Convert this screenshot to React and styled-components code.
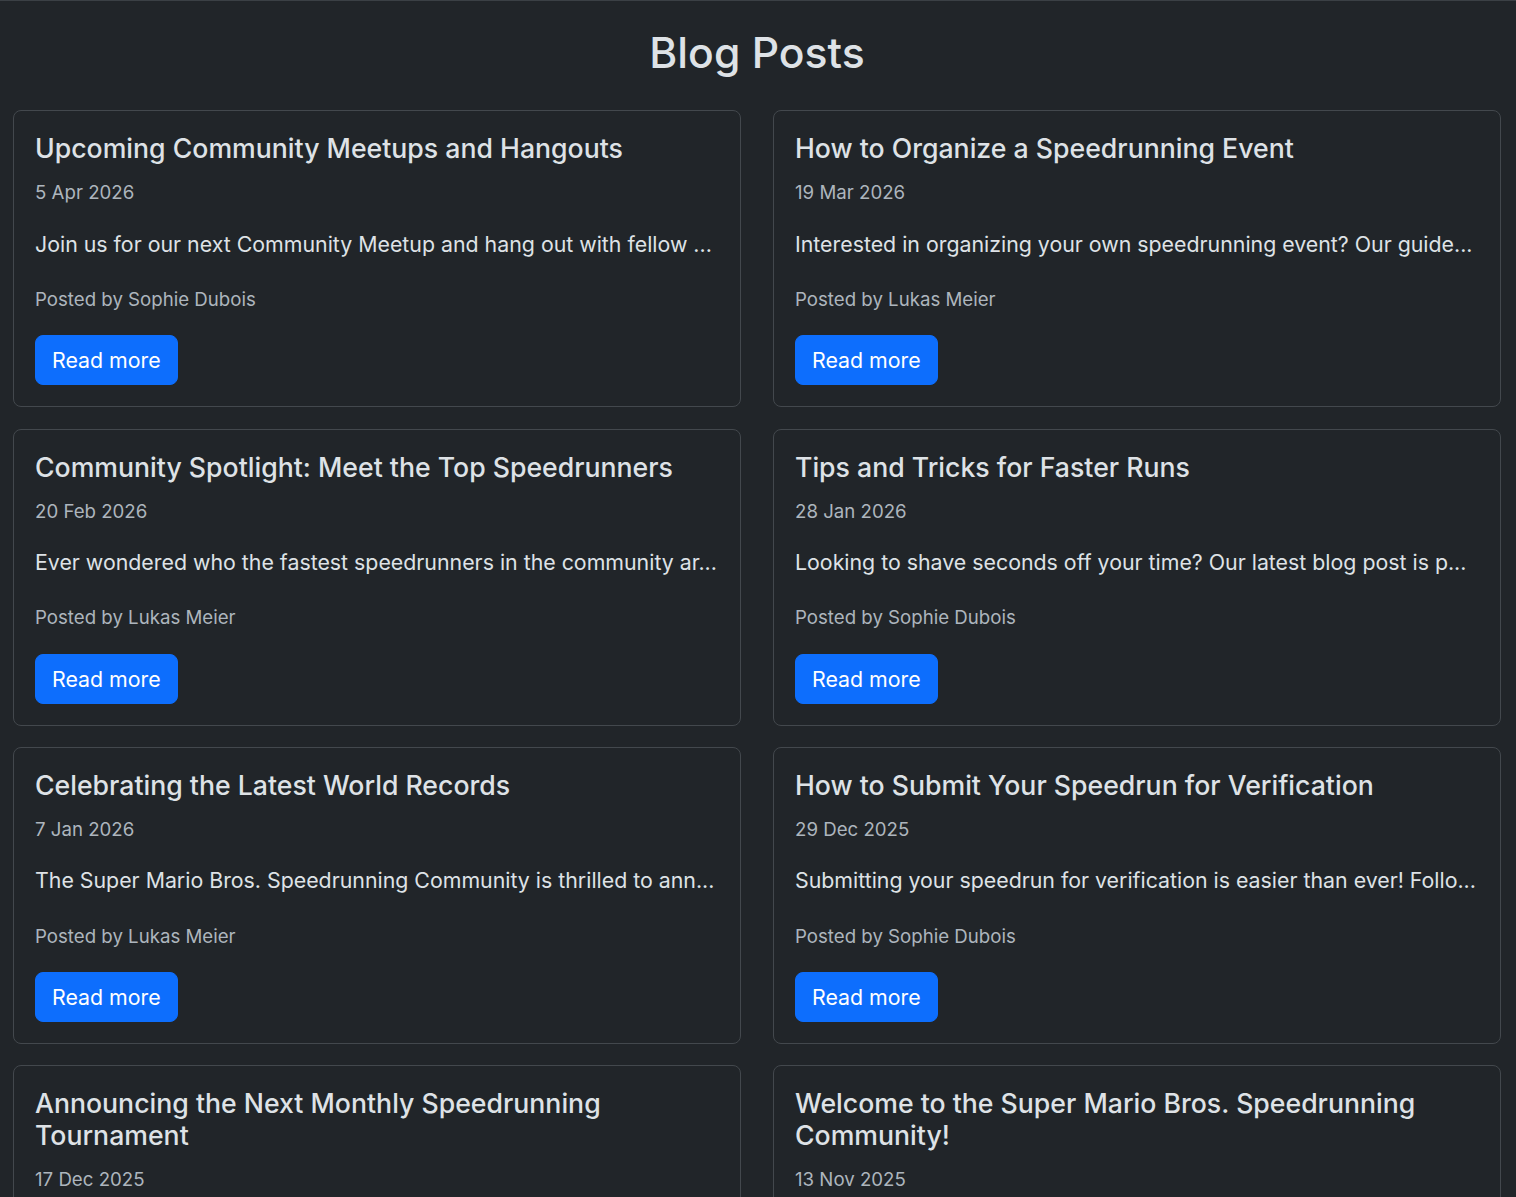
import React from "react";
import styled, { createGlobalStyle } from "styled-components";

const GlobalStyle = createGlobalStyle`
  html, body {
    margin: 0;
    padding: 0;
    background: #212529;
  }
  body {
    font-family: Inter, "Noto Sans", sans-serif;
    color: #dee2e6;
  }
  * {
    box-sizing: border-box;
  }
`;

const Page = styled.div`
  min-height: 1197px;
  background: #212529;
  padding: 26px 15px 0 13px;
  border-top: 1px solid #3b4045;
`;

const PageTitle = styled.h1`
  margin: 0 0 32px;
  text-align: center;
  font-size: 42.67px;
  font-weight: 500;
  line-height: 1.2;
  color: #dee2e6;
`;

const PostGrid = styled.div`
  display: grid;
  grid-template-columns: repeat(2, minmax(0, 1fr));
  column-gap: 32px;
  row-gap: 21.4px;
`;

const Card = styled.div`
  min-width: 0;
  border: 1px solid #43484d;
  border-radius: 8px;
  background: #212529;
  padding: 21px;
  display: flex;
  flex-direction: column;
  align-items: flex-start;
`;

const CardTitle = styled.h5`
  margin: 0 0 15px;
  font-size: 26.67px;
  font-weight: 500;
  line-height: 1.2;
  color: #dee2e6;
`;

const PostDate = styled.p`
  margin: 0 0 21.33px;
  font-size: 18.67px;
  line-height: 1.5;
  color: #adb5bd;
`;

const Excerpt = styled.p`
  margin: 0 0 25.33px;
  font-size: 21.33px;
  line-height: 1.5;
  color: #dee2e6;
  white-space: nowrap;
`;

const Author = styled.p`
  margin: 0 0 21.33px;
  font-size: 18.67px;
  line-height: 1.5;
  color: #adb5bd;
`;

const ReadMore = styled.button`
  font-family: inherit;
  font-size: 21.33px;
  line-height: 32px;
  padding: 8px 16px;
  color: #fff;
  background: #0d6efd;
  border: 1px solid #0d6efd;
  border-radius: 8px;
  cursor: pointer;
`;

const posts = [
  {
    title: "Upcoming Community Meetups and Hangouts",
    date: "5 Apr 2026",
    excerpt: "Join us for our next Community Meetup and hang out with fellow ...",
    author: "Sophie Dubois",
  },
  {
    title: "How to Organize a Speedrunning Event",
    date: "19 Mar 2026",
    excerpt: "Interested in organizing your own speedrunning event? Our guide...",
    author: "Lukas Meier",
  },
  {
    title: "Community Spotlight: Meet the Top Speedrunners",
    date: "20 Feb 2026",
    excerpt: "Ever wondered who the fastest speedrunners in the community ar...",
    author: "Lukas Meier",
  },
  {
    title: "Tips and Tricks for Faster Runs",
    date: "28 Jan 2026",
    excerpt: "Looking to shave seconds off your time? Our latest blog post is p...",
    author: "Sophie Dubois",
  },
  {
    title: "Celebrating the Latest World Records",
    date: "7 Jan 2026",
    excerpt: "The Super Mario Bros. Speedrunning Community is thrilled to ann...",
    author: "Lukas Meier",
  },
  {
    title: "How to Submit Your Speedrun for Verification",
    date: "29 Dec 2025",
    excerpt: "Submitting your speedrun for verification is easier than ever! Follo...",
    author: "Sophie Dubois",
  },
  {
    title: "Announcing the Next Monthly Speedrunning Tournament",
    date: "17 Dec 2025",
    excerpt: "Get ready for the next Monthly Speedrunning Tournament! Sign up ...",
    author: "Lukas Meier",
  },
  {
    title: "Welcome to the Super Mario Bros. Speedrunning Community!",
    date: "13 Nov 2025",
    excerpt: "Welcome to our community! Whether you're a seasoned speedrunn...",
    author: "Sophie Dubois",
  },
];

const PostCard = ({ post }) => (
  <Card>
    <CardTitle>{post.title}</CardTitle>
    <PostDate>{post.date}</PostDate>
    <Excerpt>{post.excerpt}</Excerpt>
    <Author>Posted by {post.author}</Author>
    <ReadMore>Read more</ReadMore>
  </Card>
);

const App = () => (
  <>
    <GlobalStyle />
    <Page>
      <PageTitle>Blog Posts</PageTitle>
      <PostGrid>
        {posts.map((post) => (
          <PostCard key={post.title} post={post} />
        ))}
      </PostGrid>
    </Page>
  </>
);

export default App;
